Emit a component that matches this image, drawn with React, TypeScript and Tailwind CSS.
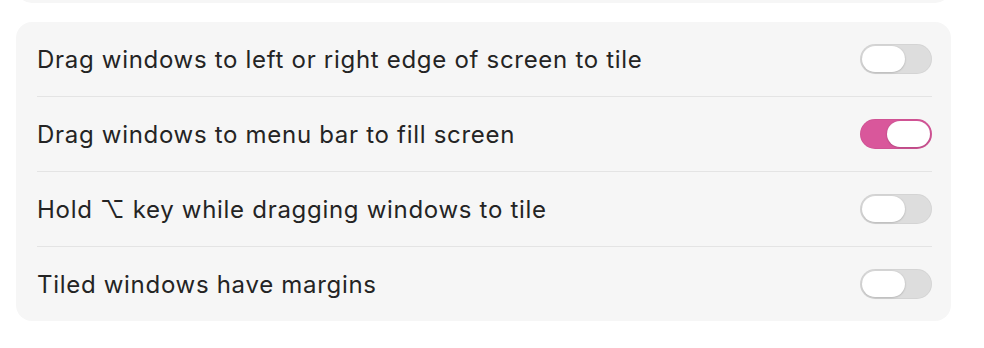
import { useState } from 'react';

type Setting = { id: string; label: string; on: boolean };

const initial: Setting[] = [
  { id: 'edge', label: 'Drag windows to left or right edge of screen to tile', on: false },
  { id: 'menubar', label: 'Drag windows to menu bar to fill screen', on: true },
  { id: 'option', label: 'Hold ⌥ key while dragging windows to tile', on: false },
  { id: 'margins', label: 'Tiled windows have margins', on: false },
];

function Toggle({ on, onChange }: { on: boolean; onChange: () => void }) {
  return (
    <button
      type="button"
      onClick={onChange}
      className={`flex h-[30px] w-[72px] shrink-0 items-center rounded-full p-[2px] shadow-[inset_0_0_0_1px_rgba(0,0,0,0.04)] ${
        on ? 'justify-end bg-[#d9579b]' : 'justify-start bg-[#dddddd]'
      }`}
    >
      <span className="h-[26px] w-[43px] rounded-full bg-white shadow-[0_0.5px_2px_rgba(0,0,0,0.25)]" />
    </button>
  );
}

export default function App() {
  const [settings, setSettings] = useState(initial);

  const toggle = (id: string) =>
    setSettings((prev) => prev.map((s) => (s.id === id ? { ...s, on: !s.on } : s)));

  return (
    <div
      className="h-[348px] w-[984px] bg-white px-4 text-[#242424]"
      style={{ fontFamily: 'Inter, "Noto Sans", sans-serif' }}
    >
      {/* bottom edge of the group above */}
      <div className="flex h-[3px] items-end overflow-hidden">
        <div className="h-[16px] w-[935px] rounded-b-2xl bg-[#f6f6f6]" />
      </div>

      <div className="mt-[19px] w-[935px] rounded-2xl bg-[#f6f6f6] pl-[21px] pr-[19px]">
        {settings.map((s, i) => (
          <div
            key={s.id}
            className={`flex items-center justify-between ${
              i > 0 ? 'h-[75px] border-t border-[#e4e4e4]' : 'h-[74px]'
            }`}
          >
            <span className="pt-[2px] text-[24px] tracking-[0.7px]">{s.label}</span>
            <Toggle on={s.on} onChange={() => toggle(s.id)} />
          </div>
        ))}
      </div>
    </div>
  );
}
